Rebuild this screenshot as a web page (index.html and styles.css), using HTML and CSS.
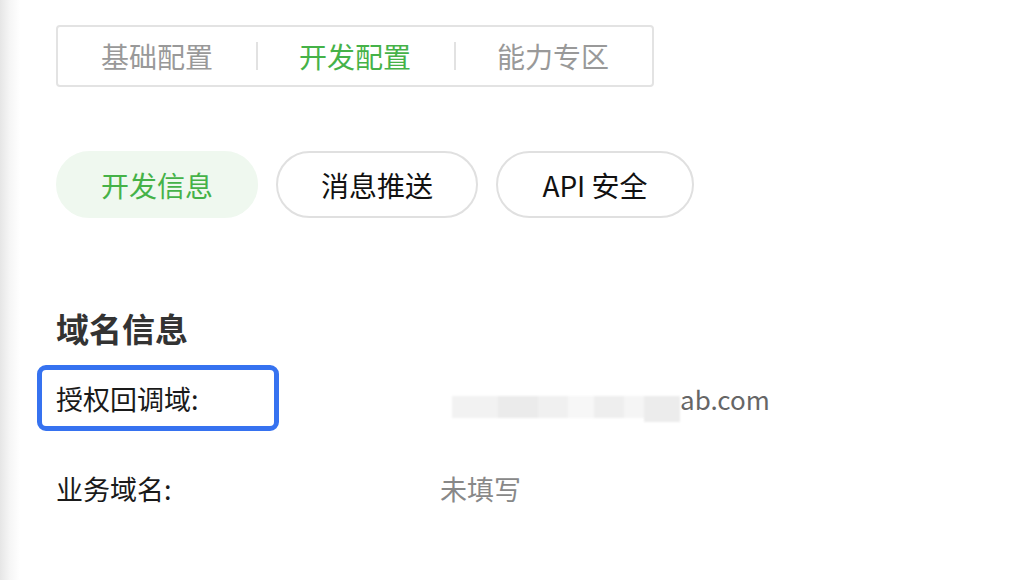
FILE: index.html
```html
<!DOCTYPE html>
<html lang="zh-CN">
<head>
<meta charset="utf-8">
<title>开发配置</title>
<link rel="stylesheet" href="styles.css">
</head>
<body>
<div class="page">
  <div class="tabs">
    <div class="tab">基础配置</div>
    <div class="tab sep active">开发配置</div>
    <div class="tab sep">能力专区</div>
  </div>

  <div class="pills">
    <div class="pill active">开发信息</div>
    <div class="pill">消息推送</div>
    <div class="pill pill-narrow">API 安全</div>
  </div>

  <h2 class="section-title">域名信息</h2>

  <div class="rows">
    <div class="row">
      <div class="label highlighted">授权回调域:</div>
      <div class="value">
        <span class="blur-group">
          <span class="blur b1"></span><span class="blur b2"></span><span class="blur b3"></span><span class="blur b4"></span><span class="blur b5"></span><span class="blur b6"></span><span class="blur b7"></span>
        </span><span class="domain">ab.com</span>
      </div>
    </div>
    <div class="row">
      <div class="label">业务域名:</div>
      <div class="value muted">未填写</div>
    </div>
  </div>
</div>
</body>
</html>
```

FILE: styles.css
```css
html, body {
  margin: 0;
  padding: 0;
}

body {
  width: 1026px;
  height: 580px;
  overflow: hidden;
  font-family: "Noto Sans CJK SC", "Noto Sans", sans-serif;
  background: linear-gradient(to right, #e6e6e6 0, #f6f6f6 10px, #ffffff 20px);
  color: #1a1a1a;
}

.page {
  padding: 25px 0 0 56px;
}

.tabs {
  display: flex;
  width: 598px;
  height: 62px;
  box-sizing: border-box;
  border: 2px solid #e3e3e3;
  border-radius: 4px;
  background: #fff;
}

.tab {
  flex: 1;
  display: flex;
  align-items: center;
  justify-content: center;
  font-size: 28px;
  color: #999;
  position: relative;
}

.tab.sep::before {
  content: "";
  position: absolute;
  left: 0;
  top: 15px;
  width: 2px;
  height: 28px;
  background: #e2e2e2;
}

.tab.active {
  color: #45b248;
}

.pills {
  display: flex;
  gap: 18px;
  margin-top: 64px;
}

.pill {
  width: 202px;
  height: 67px;
  box-sizing: border-box;
  border: 2px solid #e0e0e0;
  border-radius: 34px;
  display: flex;
  align-items: center;
  justify-content: center;
  font-size: 28px;
  color: #111;
  background: #fff;
}

.pill-narrow {
  width: 198px;
}

.pill.active {
  border-color: #eff8ef;
  background: #eff8ef;
  color: #45b248;
}

.section-title {
  margin: 90px 0 0;
  font-size: 33px;
  line-height: 40px;
  font-weight: 700;
  color: #333;
}

.rows {
  margin-top: 31px;
  display: flex;
  flex-direction: column;
  gap: 50px;
}

.row {
  display: grid;
  grid-template-columns: 384px auto;
  align-items: center;
  height: 40px;
}

.label {
  font-size: 27px;
  line-height: 40px;
  color: #1a1a1a;
  position: relative;
}

.label.highlighted::after {
  content: "";
  position: absolute;
  left: -19px;
  top: -14px;
  width: 242px;
  height: 66px;
  box-sizing: border-box;
  border: 5px solid #3672f0;
  border-radius: 9px;
}

.value {
  font-size: 27px;
  line-height: 40px;
  display: flex;
  align-items: center;
}

.muted {
  color: #888;
}

.blur-group {
  display: flex;
  align-items: center;
  height: 40px;
  margin-left: 12px;
  filter: blur(1.2px);
}

.blur {
  display: block;
  height: 22px;
  margin-top: 16px;
  background: #ececec;
}

.b1 { width: 46px; background: #f2f2f2; }
.b2 { width: 40px; background: #ebebeb; }
.b3 { width: 30px; background: #f0f0f0; }
.b4 { width: 26px; background: #f7f7f7; }
.b5 { width: 30px; background: #eeeeee; }
.b6 { width: 20px; background: #f5f5f5; }
.b7 { width: 36px; background: #ececec; height: 26px; margin-top: 20px; }

.domain {
  color: #666;
  font-size: 26px;
}
```
